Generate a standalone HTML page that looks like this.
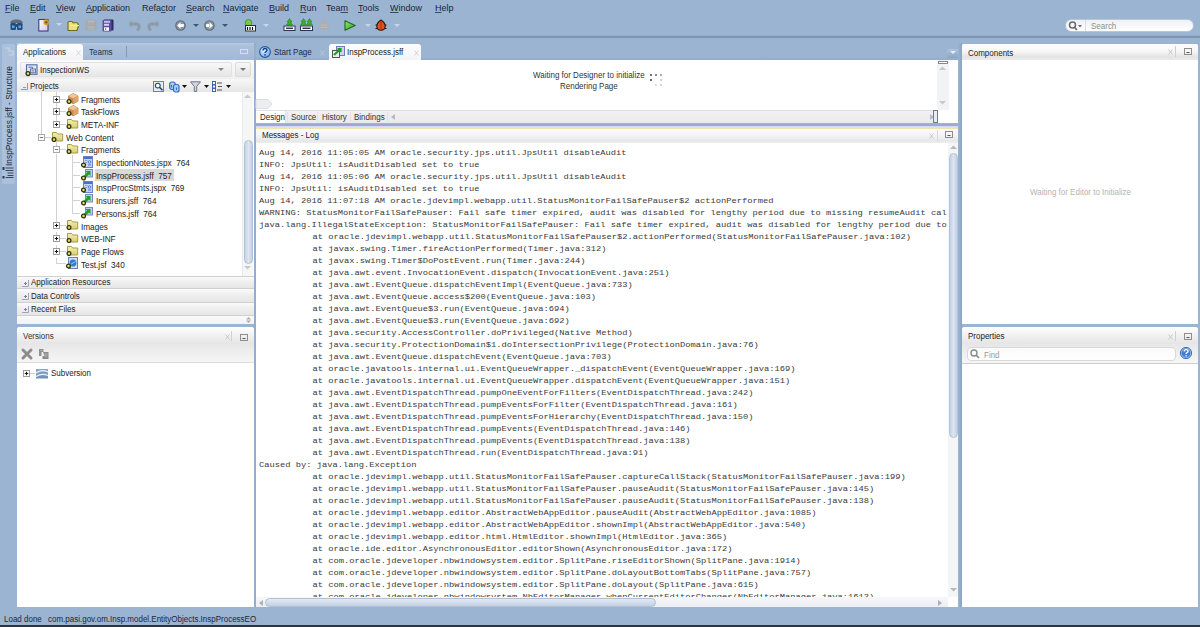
<!DOCTYPE html><html><head><meta charset="utf-8"><style>
html,body{margin:0;padding:0;}
body{width:1200px;height:627px;overflow:hidden;position:relative;background:#9bb4d2;font-family:"Liberation Sans",sans-serif;font-size:8px;color:#1a1a1a;}
div{position:absolute;box-sizing:border-box;}
.t{white-space:pre;line-height:10px;font-size:8.5px;transform:scaleX(0.94);transform-origin:0 0;}
.m{position:absolute;white-space:pre;font-family:"Liberation Mono",monospace;font-size:8.75px;line-height:12px;color:#3a3a3a;transform:scaleY(0.9);transform-origin:0 9px;}
.menu{white-space:pre;font-size:9px;line-height:12px;color:#1b2536;}
.menu u{text-decoration:underline;text-underline-offset:0.6px;text-decoration-thickness:1px;text-decoration-color:#3a4a60;}
.gh{background:linear-gradient(#ffffff 0%,#f4f4f4 40%,#e4e4e4 80%,#ececec 100%);}
</style></head><body>

<svg width="0" height="0" style="position:absolute">
<defs>
<linearGradient id="gfold" x1="0" y1="0" x2="0" y2="1"><stop offset="0" stop-color="#f6f0b8"/><stop offset="1" stop-color="#d8cc70"/></linearGradient>
<linearGradient id="gpkg" x1="0" y1="0" x2="1" y2="1"><stop offset="0" stop-color="#f3c48a"/><stop offset="1" stop-color="#c07a3a"/></linearGradient>
<symbol id="ring" viewBox="0 0 6 6"><circle cx="3" cy="3" r="2" fill="#f4ea70" stroke="#1d3a10" stroke-width="1.3"/></symbol>
<symbol id="fold" viewBox="0 0 13 11">
 <path d="M1.5 1.5 h4 l1.2 1.5 h5 v7 h-10.2 z" fill="url(#gfold)" stroke="#a89c48" stroke-width="1"/>
 <circle cx="3" cy="8.5" r="1.9" fill="#e8e060" stroke="#2a3410" stroke-width="1.3"/>
</symbol>
<symbol id="pkg" viewBox="0 0 13 11">
 <path d="M2.5 3 l4.8 -2.5 l4.7 2.5 v5.2 l-4.7 2.5 l-4.8 -2.5z" fill="#cf8e4e" stroke="#a8703a" stroke-width="0.7" stroke-linejoin="round"/>
 <path d="M2.5 3 l4.8 -2.5 l4.7 2.5 l-4.7 2.3z" fill="#f0c898"/>
 <path d="M7.3 5.3 v5.4" stroke="#b07840" stroke-width="0.7"/>
 <path d="M7.3 5.3 l4.7 -2.3 v5.2 l-4.7 2.5z" fill="#e0a468"/>
 <circle cx="3" cy="8.5" r="1.9" fill="#e8e060" stroke="#2a3410" stroke-width="1.3"/>
</symbol>
<symbol id="jspx" viewBox="0 0 12 12">
 <rect x="2.5" y="0.5" width="9" height="11" fill="#c6d4f4" stroke="#6a80c8" stroke-width="1"/>
 <rect x="3" y="1" width="8" height="2" fill="#4f6fc4"/>
 <path d="M4 4.5h2.5M4 6.5h2" stroke="#8aa0d8" stroke-width="1"/>
 <circle cx="8.5" cy="6" r="1.3" fill="none" stroke="#4f6fc4" stroke-width="0.8"/>
 <path d="M7 9h3" stroke="#4f6fc4" stroke-width="1"/>
 <circle cx="2.5" cy="9" r="1.9" fill="#e8e060" stroke="#2a3410" stroke-width="1.3"/>
</symbol>
<symbol id="jsff" viewBox="0 0 12 12">
 <rect x="4.5" y="0.5" width="7" height="7.5" fill="#c0cdec" stroke="#7a8ac0" stroke-width="1"/>
 <path d="M2 9.5 L7.5 4" stroke="#22a02a" stroke-width="2.6" fill="none"/>
 <path d="M4.5 2 h5 v5z" fill="#22a02a"/>
 <circle cx="2.5" cy="9" r="1.9" fill="#e8e060" stroke="#2a3410" stroke-width="1.3"/>
</symbol>
<symbol id="jsf" viewBox="0 0 12 12">
 <rect x="2.5" y="0.5" width="9" height="11" fill="#d0ddf2" stroke="#6a7fb8" stroke-width="1"/>
 <circle cx="7" cy="6" r="3.4" fill="#2b7fc8"/>
 <path d="M4.5 7.5 l5 -3" stroke="#9fd0f0" stroke-width="1"/>
 <circle cx="2.5" cy="9" r="1.9" fill="#e8e060" stroke="#2a3410" stroke-width="1.3"/>
</symbol>
<symbol id="plus" viewBox="0 0 7 7">
 <rect x="0.5" y="0.5" width="6" height="6" fill="#fff" stroke="#9c9c9c" stroke-width="1"/>
 <path d="M1.8 3.5h3.4M3.5 1.8v3.4" stroke="#111" stroke-width="1"/>
</symbol>
<symbol id="minus" viewBox="0 0 7 7">
 <rect x="0.5" y="0.5" width="6" height="6" fill="#fff" stroke="#a8a8a8" stroke-width="1"/>
 <path d="M1.8 3.5h3.4" stroke="#777" stroke-width="1"/>
</symbol>
</defs></svg>
<div class="menu" style="left:5px;top:1.5px;"><u>F</u>ile</div>
<div class="menu" style="left:30px;top:1.5px;"><u>E</u>dit</div>
<div class="menu" style="left:56px;top:1.5px;"><u>V</u>iew</div>
<div class="menu" style="left:86px;top:1.5px;"><u>A</u>pplication</div>
<div class="menu" style="left:142px;top:1.5px;">Refa<u>c</u>tor</div>
<div class="menu" style="left:186px;top:1.5px;"><u>S</u>earch</div>
<div class="menu" style="left:223px;top:1.5px;"><u>N</u>avigate</div>
<div class="menu" style="left:269px;top:1.5px;"><u>B</u>uild</div>
<div class="menu" style="left:300px;top:1.5px;"><u>R</u>un</div>
<div class="menu" style="left:326px;top:1.5px;">Tea<u>m</u></div>
<div class="menu" style="left:358px;top:1.5px;"><u>T</u>ools</div>
<div class="menu" style="left:390px;top:1.5px;"><u>W</u>indow</div>
<div class="menu" style="left:435px;top:1.5px;"><u>H</u>elp</div>
<svg style="position:absolute;left:9px;top:18px;overflow:visible;" width="15" height="13" viewBox="0 0 15 13"><path d="M1 5 q1 -4 6.5 -3.5 q5.5 -0.5 6.5 3.5z" fill="#5c5f66" opacity="0.85"/><rect x="1.5" y="5" width="5.5" height="7" rx="1.2" fill="#1d4f86"/><rect x="8" y="5" width="5.5" height="7" rx="1.2" fill="#1d4f86"/><rect x="6" y="6" width="3" height="3" fill="#1d4f86"/><rect x="3" y="7.5" width="2.5" height="2.5" fill="#6e9fd0"/><rect x="9.5" y="7.5" width="2.5" height="2.5" fill="#6e9fd0"/></svg>
<svg style="position:absolute;left:38px;top:18px;overflow:visible;" width="12" height="14" viewBox="0 0 12 14"><defs><linearGradient id="gnew" x1="0" y1="0" x2="1" y2="1"><stop offset="0" stop-color="#ffffff"/><stop offset="1" stop-color="#d8c8ec"/></linearGradient><radialGradient id="gstar"><stop offset="0" stop-color="#ffe27a"/><stop offset="0.6" stop-color="#d99a1a"/><stop offset="1" stop-color="#d99a1a" stop-opacity="0"/></radialGradient></defs><rect x="0.8" y="1.5" width="9.2" height="11.5" fill="url(#gnew)" stroke="#3c3c7c" stroke-width="1.1"/><circle cx="8.3" cy="4.3" r="3.6" fill="url(#gstar)"/><circle cx="8.3" cy="4.3" r="1.4" fill="#8a5a10"/></svg>
<svg style="position:absolute;left:56px;top:23px;overflow:visible;" width="6" height="4" viewBox="0 0 6 4"><path d="M0 0h6l-3 3z" fill="#c8d6ea"/></svg>
<svg style="position:absolute;left:66.5px;top:19.5px;overflow:visible;" width="13" height="12" viewBox="0 0 13 12"><path d="M1 2.5 q0 -1 1 -1 h3 l1 1.3 h4 q1 0 1 1 v1.2 h0.8 l-1.8 5.5 h-9z" fill="#ece27a" stroke="#6f6a20" stroke-width="1.1" stroke-linejoin="round"/><path d="M2.5 5.5h9.5" stroke="#f8f0a8" stroke-width="1"/></svg>
<svg style="position:absolute;left:85px;top:19px;overflow:visible;" width="12" height="12" viewBox="0 0 12 12"><rect x="0.5" y="0.5" width="11" height="11" rx="1.5" fill="#a6a9ae"/><rect x="2.5" y="1.5" width="7" height="2" fill="#b8b8b8"/><rect x="2.5" y="4.5" width="7" height="1.2" fill="#b4b0ac"/><rect x="2.5" y="7.5" width="7" height="1.2" fill="#b6b8bc"/><rect x="2.5" y="9.5" width="7" height="1.2" fill="#b0b4b8"/></svg>
<svg style="position:absolute;left:102px;top:19px;overflow:visible;" width="12" height="13" viewBox="0 0 12 13"><rect x="1.5" y="0.5" width="10" height="11" rx="1" fill="#2f2866"/><rect x="0.5" y="1" width="9" height="11.5" rx="1" fill="#5a4f9e"/><rect x="2" y="1.8" width="6" height="2" fill="#c6bdf0"/><rect x="2" y="4.8" width="5" height="2" fill="#d6d0f6"/><rect x="2" y="8.3" width="5" height="3.4" fill="#fff"/><path d="M3.2 9.2v1.6l1.5 -0.8z" fill="#111"/></svg>
<svg style="position:absolute;left:128px;top:19px;overflow:visible;" width="13" height="12" viewBox="0 0 13 12"><path d="M1.5 5h6.5q3.5 0 3.2 3.5l-1.8 3" fill="none" stroke="#8e9ba6" stroke-width="3"/><path d="M0.5 5l3.5 -3.5v7z" fill="#8e9ba6"/></svg>
<svg style="position:absolute;left:147px;top:19px;overflow:visible;" width="13" height="12" viewBox="0 0 13 12"><path d="M11.5 5h-6.5q-3.5 0 -3.2 3.5l1.8 3" fill="none" stroke="#8e9ba6" stroke-width="3"/><path d="M12.5 5l-3.5 -3.5v7z" fill="#8e9ba6"/></svg>
<svg style="position:absolute;left:175px;top:20px;overflow:visible;" width="12" height="11" viewBox="0 0 12 11"><circle cx="5.5" cy="5.5" r="5.3" fill="#5f6a78"/><circle cx="5.5" cy="5.5" r="4.2" fill="#8c96a3"/><path d="M2.2 5.5 l3.3 -3.2 v6.4z M5 4.1h3.8v2.8h-3.8z" fill="#fff"/></svg>
<svg style="position:absolute;left:193px;top:24px;overflow:visible;" width="6" height="4" viewBox="0 0 6 4"><path d="M0 0h6l-3 3z" fill="#3f5778"/></svg>
<svg style="position:absolute;left:204px;top:20px;overflow:visible;" width="12" height="11" viewBox="0 0 12 11"><circle cx="5.5" cy="5.5" r="5.3" fill="#5f6a78"/><circle cx="5.5" cy="5.5" r="4.2" fill="#8c96a3"/><path d="M8.8 5.5 l-3.3 -3.2 v6.4z M2.2 4.1h3.8v2.8h-3.8z" fill="#fff"/></svg>
<svg style="position:absolute;left:222px;top:24px;overflow:visible;" width="6" height="4" viewBox="0 0 6 4"><path d="M0 0h6l-3 3z" fill="#3f5778"/></svg>
<svg style="position:absolute;left:244px;top:19px;overflow:visible;" width="13" height="13" viewBox="0 0 13 13"><circle cx="4.5" cy="3.8" r="3.3" fill="#78c850" stroke="#3a8a20" stroke-width="0.8"/><rect x="1.5" y="6.5" width="10" height="5.5" fill="#fff" stroke="#24303a" stroke-width="1"/><path d="M3.5 8v3M6 8v3M8.5 8v3" stroke="#111" stroke-width="1.2"/></svg>
<svg style="position:absolute;left:263px;top:24px;overflow:visible;" width="6" height="4" viewBox="0 0 6 4"><path d="M0 0h6l-3 3z" fill="#c8d6ea"/></svg>
<svg style="position:absolute;left:283px;top:18px;overflow:visible;" width="13" height="13" viewBox="0 0 13 13"><path d="M6.5 0.5 l2.5 3.5 h-1.5 l2 3 h-6 l2 -3 h-1.5z" fill="#36b030" stroke="#1f7a18" stroke-width="0.5"/><rect x="1" y="8" width="11" height="4.5" fill="#fff" stroke="#2a3450" stroke-width="1"/><path d="M3 10.3h7" stroke="#2a3450" stroke-width="1.5"/></svg>
<svg style="position:absolute;left:300px;top:18px;overflow:visible;" width="13" height="13" viewBox="0 0 13 13"><path d="M3.5 0.5 l2.3 3.3 h-1.3 l1.8 3 h-5.6 l1.8 -3 h-1.3z M9.5 0.5 l2.3 3.3 h-1.3 l1.8 3 h-5.6 l1.8 -3 h-1.3z" fill="#36b030" stroke="#1f7a18" stroke-width="0.5"/><rect x="0.5" y="8" width="12" height="4.5" fill="#fff" stroke="#2a3450" stroke-width="1"/><path d="M2.5 10.3h8" stroke="#2a3450" stroke-width="1.5"/></svg>
<svg style="position:absolute;left:318px;top:19px;overflow:visible;" width="12" height="12" viewBox="0 0 12 12"><path d="M3 1h6v3h2v7h-10v-7h2z" fill="#aaaeb2" opacity="0.85"/><path d="M2.5 6h7M2.5 8.5h7" stroke="#bcbcbc" stroke-width="1"/></svg>
<svg style="position:absolute;left:344px;top:19.5px;overflow:visible;" width="12" height="11" viewBox="0 0 12 11"><defs><linearGradient id="grun" x1="0" y1="0" x2="1" y2="1"><stop offset="0" stop-color="#9ae878"/><stop offset="1" stop-color="#2a9a20"/></linearGradient></defs><path d="M1 0.8 L11.2 5.5 L1 10.2z" fill="url(#grun)" stroke="#1d6a16" stroke-width="1.1" stroke-linejoin="round"/></svg>
<svg style="position:absolute;left:365px;top:24px;overflow:visible;" width="6" height="4" viewBox="0 0 6 4"><path d="M0 0h6l-3 3z" fill="#c8d6ea"/></svg>
<svg style="position:absolute;left:375px;top:19px;overflow:visible;" width="12" height="12" viewBox="0 0 12 12"><path d="M6 1 q4.5 3 4.2 6.5 q-0.5 3.8 -4.2 3.8 q-3.7 0 -4.2 -3.8 q-0.3 -3.5 4.2 -6.5z" fill="#e8501c" stroke="#2a1408" stroke-width="1.1"/><path d="M6 3v8" stroke="#9a2a0a" stroke-width="0.8"/><path d="M0.5 6h1.5M10 6h1.5M0.5 9.5h1.5M10 9.5h1.5" stroke="#1a1a2a" stroke-width="1"/></svg>
<svg style="position:absolute;left:394px;top:24px;overflow:visible;" width="6" height="4" viewBox="0 0 6 4"><path d="M0 0h6l-3 3z" fill="#c8d6ea"/></svg>
<div style="left:0px;top:35px;width:1200px;height:1px;background:#93adcb"></div>
<div style="left:0px;top:36px;width:1200px;height:2px;background:#7b95b5"></div>
<div style="left:1065px;top:19px;width:129px;height:13px;background:linear-gradient(#eef1f5,#ffffff);border:1px solid #b9c6d6;border-radius:7px"></div>
<svg style="position:absolute;left:1068px;top:21px;overflow:visible;" width="16" height="10" viewBox="0 0 16 10"><circle cx="4.5" cy="4" r="3" fill="none" stroke="#6a6a6a" stroke-width="1.5"/><path d="M6.5 6.5 l2.5 2.5" stroke="#6a6a6a" stroke-width="1.7"/><path d="M10 4h4l-2 2.5z" fill="#6a6a6a"/></svg>
<div style="left:1085px;top:20px;width:1px;height:11px;background:#d8dee6"></div>
<div class="t" style="left:1091px;top:21px;color:#8c8c8c">Search</div>
<div style="left:2px;top:44px;width:13px;height:140px;background:#aac0db;border-radius:2px"></div>
<svg style="position:absolute;left:4px;top:47px;overflow:visible;" width="10" height="9" viewBox="0 0 10 9"><path d="M1 1h4v3h4v4h-4" fill="none" stroke="#c8d6e8" stroke-width="1.2"/></svg>
<div class="t" style="left:4px;top:166px;font-size:8.9px;transform:rotate(-90deg) scaleX(0.94);transform-origin:0 0;color:#1b2536">InspProcess.jsff - Structure</div>
<svg style="position:absolute;left:1px;top:166px;overflow:visible;" width="14" height="13" viewBox="0 0 14 13"><rect x="1.5" y="1" width="2" height="3" fill="#2a3a5a"/><rect x="1.5" y="10" width="2" height="2.5" fill="#2a3a5a"/><path d="M4.5 2h8M4.5 4.5h8M6.5 7h6M6.5 9.5h6M4.5 11.5h8" stroke="#3a4658" stroke-width="1"/></svg>
<div style="left:17px;top:43px;width:237px;height:281px;background:#fff"></div>
<div style="left:17px;top:43px;width:237px;height:17px;background:linear-gradient(#b6cae1 0%,#aac0da 20%,#a2b9d6 100%)"></div>
<div style="left:17px;top:43.5px;width:66px;height:16.5px;background:linear-gradient(#fdfdfe,#f1f3f6);border-radius:3px 3px 0 0"></div>
<div class="t" style="left:23px;top:47px;color:#262626">Applications</div>
<svg style="position:absolute;left:75.5px;top:49.5px;overflow:visible;" width="5" height="6" viewBox="0 0 5 6"><path d="M0.5 0.5l4 5M4.5 0.5l-4 5" stroke="#d4d4d4" stroke-width="0.9"/></svg>
<div class="t" style="left:89px;top:47px;color:#23304a">Teams</div>
<div style="left:126px;top:46px;width:1px;height:11px;background:#7f98b8"></div>
<div style="left:240px;top:48.5px;width:8px;height:5.5px;border:1px solid #d6e0ec"></div>
<div style="left:17px;top:60px;width:237px;height:19px;background:linear-gradient(#fbfbfb,#efefef)"></div>
<div style="left:20px;top:62px;width:212px;height:15px;background:linear-gradient(#f8f8f8,#e6e6e6);border:1px solid #e2e2e2;border-radius:2px"></div>
<svg style="position:absolute;left:24.5px;top:64px;overflow:visible;" width="13" height="12" viewBox="0 0 13 12"><rect x="1.5" y="0.8" width="10.5" height="9.5" fill="#d8e8f8" stroke="#5a6c9c" stroke-width="1.1"/><path d="M3.5 3.2h4v5.5" fill="none" stroke="#6a7080" stroke-width="1"/><rect x="5.5" y="5" width="5" height="3.8" fill="#f0f4fa" stroke="#5a6c9c" stroke-width="0.9"/><path d="M6.5 6.5h3M6.5 7.8h3" stroke="#5a6c9c" stroke-width="0.6"/><circle cx="3" cy="9.6" r="1.9" fill="#e8e070" stroke="#2a3410" stroke-width="1.3"/></svg>
<div class="t" style="left:40px;top:65.2px;color:#1a1a1a">InspectionWS</div>
<svg style="position:absolute;left:218px;top:68px;overflow:visible;" width="6" height="4" viewBox="0 0 6 4"><path d="M0 0h6l-3 3z" fill="#8a8a8a"/></svg>
<div style="left:235px;top:62px;width:16px;height:15px;background:linear-gradient(#f7f7f7,#e3e3e3);border:1px solid #dcdcdc;border-radius:2px"></div>
<svg style="position:absolute;left:240px;top:68px;overflow:visible;" width="6" height="4" viewBox="0 0 6 4"><path d="M0 0h6l-3 3z" fill="#7a7a7a"/></svg>
<div style="left:17px;top:79px;width:237px;height:13px;background:linear-gradient(#f7f7f7,#e6e6e6)"></div>
<svg style="position:absolute;left:21px;top:83px;overflow:visible;" width="7" height="7" viewBox="0 0 7 7"><path d="M6.5 0v6.5h-6.5" fill="none" stroke="#8a9ab8" stroke-width="1"/><path d="M2 4.5h3" stroke="#8a9ab8"/></svg>
<div class="t" style="left:30px;top:81.3px;color:#222">Projects</div>
<svg style="position:absolute;left:153px;top:81px;overflow:visible;" width="11" height="11" viewBox="0 0 11 11"><rect x="0.5" y="0.5" width="10" height="10" fill="#e4ecf8" stroke="#6a84b0" stroke-width="1"/><circle cx="4.8" cy="4.6" r="2.4" fill="#fff" stroke="#304060" stroke-width="1.1"/><path d="M6.5 6.3l3 3" stroke="#304060" stroke-width="1.5"/></svg>
<svg style="position:absolute;left:169px;top:80.5px;overflow:visible;" width="11" height="12" viewBox="0 0 11 12"><rect x="0.7" y="1" width="5.5" height="7.5" rx="2" fill="#a8ccf4" stroke="#2f6cc4" stroke-width="1.2"/><rect x="4.5" y="3.5" width="5.5" height="7.5" rx="2" fill="#a8ccf4" stroke="#2f6cc4" stroke-width="1.2"/><path d="M2.5 4v2.5M7.5 6.5v2.5" stroke="#2f6cc4" stroke-width="1"/></svg>
<svg style="position:absolute;left:182px;top:85px;overflow:visible;" width="5" height="3" viewBox="0 0 5 3"><path d="M0 0h5l-2.5 3z" fill="#111"/></svg>
<svg style="position:absolute;left:190px;top:81px;overflow:visible;" width="11" height="11" viewBox="0 0 11 11"><path d="M0.5 0.8h10l-3.8 4.6v5h-2.4v-5z" fill="#d4d6e0" stroke="#707488" stroke-width="1" stroke-linejoin="round"/></svg>
<svg style="position:absolute;left:204px;top:85px;overflow:visible;" width="5" height="3" viewBox="0 0 5 3"><path d="M0 0h5l-2.5 3z" fill="#111"/></svg>
<svg style="position:absolute;left:212px;top:81px;overflow:visible;" width="11" height="11" viewBox="0 0 11 11"><rect x="0.5" y="0.5" width="3" height="3" fill="#fff" stroke="#3c64a8"/><rect x="0.5" y="4" width="3" height="3" fill="#fff" stroke="#3c64a8"/><rect x="0.5" y="7.5" width="3" height="3" fill="#fff" stroke="#3c64a8"/><path d="M5 2h5M6 5.5h4M5 9h5" stroke="#555" stroke-width="1"/></svg>
<svg style="position:absolute;left:226px;top:85px;overflow:visible;" width="5" height="3" viewBox="0 0 5 3"><path d="M0 0h5l-2.5 3z" fill="#111"/></svg>
<div style="left:41px;top:92px;width:1px;height:42px;background:#d2d2d2;"></div>
<div style="left:56px;top:92px;width:1px;height:4px;background:#d2d2d2;"></div>
<div style="left:56px;top:102px;width:1px;height:7px;background:#d2d2d2;"></div>
<div style="left:56px;top:115px;width:1px;height:6px;background:#d2d2d2;"></div>
<div style="left:56px;top:142px;width:1px;height:4px;background:#d2d2d2;"></div>
<div style="left:56px;top:154px;width:1px;height:72px;background:#d2d2d2;"></div>
<div style="left:56px;top:232px;width:1px;height:5px;background:#d2d2d2;"></div>
<div style="left:56px;top:245px;width:1px;height:5px;background:#d2d2d2;"></div>
<div style="left:56px;top:258px;width:1px;height:6px;background:#d2d2d2;"></div>
<div style="left:72px;top:155px;width:1px;height:58px;background:#d2d2d2;"></div>
<svg style="position:absolute;left:53px;top:96px;overflow:visible;" width="7" height="7" viewBox="0 0 7 7"><use href="#plus"/></svg>
<div style="left:60px;top:99px;width:6px;height:1px;background:#d2d2d2;"></div>
<svg style="position:absolute;left:66px;top:93px;overflow:visible;" width="13" height="11" viewBox="0 0 13 11"><use href="#pkg"/></svg>
<div class="t" style="left:81px;top:94.8px;color:#222;font-size:8.72px">Fragments</div>
<svg style="position:absolute;left:53px;top:108px;overflow:visible;" width="7" height="7" viewBox="0 0 7 7"><use href="#plus"/></svg>
<div style="left:60px;top:111px;width:6px;height:1px;background:#d2d2d2;"></div>
<svg style="position:absolute;left:66px;top:105px;overflow:visible;" width="13" height="11" viewBox="0 0 13 11"><use href="#pkg"/></svg>
<div class="t" style="left:81px;top:107.47px;color:#222;font-size:8.72px">TaskFlows</div>
<svg style="position:absolute;left:53px;top:121px;overflow:visible;" width="7" height="7" viewBox="0 0 7 7"><use href="#plus"/></svg>
<div style="left:60px;top:124px;width:6px;height:1px;background:#d2d2d2;"></div>
<svg style="position:absolute;left:66px;top:118px;overflow:visible;" width="13" height="11" viewBox="0 0 13 11"><use href="#fold"/></svg>
<div class="t" style="left:81px;top:120.14px;color:#222;font-size:8.72px">META-INF</div>
<svg style="position:absolute;left:38px;top:134px;overflow:visible;" width="7" height="7" viewBox="0 0 7 7"><use href="#minus"/></svg>
<div style="left:45px;top:137px;width:6px;height:1px;background:#d2d2d2;"></div>
<svg style="position:absolute;left:51px;top:131px;overflow:visible;" width="13" height="11" viewBox="0 0 13 11"><use href="#fold"/></svg>
<div class="t" style="left:65.6px;top:132.80999999999997px;color:#222;font-size:8.72px">Web Content</div>
<svg style="position:absolute;left:53px;top:146px;overflow:visible;" width="7" height="7" viewBox="0 0 7 7"><use href="#minus"/></svg>
<div style="left:60px;top:149px;width:6px;height:1px;background:#d2d2d2;"></div>
<svg style="position:absolute;left:66px;top:143px;overflow:visible;" width="13" height="11" viewBox="0 0 13 11"><use href="#fold"/></svg>
<div class="t" style="left:81px;top:145.48px;color:#222;font-size:8.72px">Fragments</div>
<div style="left:72px;top:162px;width:8px;height:1px;background:#d2d2d2;"></div>
<svg style="position:absolute;left:81px;top:156px;overflow:visible;" width="12" height="12" viewBox="0 0 12 12"><use href="#jspx"/></svg>
<div class="t" style="left:95.7px;top:158.14999999999998px;color:#222;font-size:8.72px">InspectionNotes.jspx  764</div>
<div style="left:95px;top:168.62px;width:79px;height:12.5px;background:#d9d9d9"></div>
<div style="left:72px;top:175px;width:8px;height:1px;background:#d2d2d2;"></div>
<svg style="position:absolute;left:81px;top:169px;overflow:visible;" width="12" height="12" viewBox="0 0 12 12"><use href="#jsff"/></svg>
<div class="t" style="left:95.7px;top:170.82px;color:#222;font-size:8.72px">InspProcess.jsff  757</div>
<div style="left:72px;top:187px;width:8px;height:1px;background:#d2d2d2;"></div>
<svg style="position:absolute;left:81px;top:181px;overflow:visible;" width="12" height="12" viewBox="0 0 12 12"><use href="#jspx"/></svg>
<div class="t" style="left:95.7px;top:183.48999999999998px;color:#222;font-size:8.72px">InspProcStmts.jspx  769</div>
<div style="left:72px;top:200px;width:8px;height:1px;background:#d2d2d2;"></div>
<svg style="position:absolute;left:81px;top:194px;overflow:visible;" width="12" height="12" viewBox="0 0 12 12"><use href="#jsff"/></svg>
<div class="t" style="left:95.7px;top:196.15999999999997px;color:#222;font-size:8.72px">Insurers.jsff  764</div>
<div style="left:72px;top:213px;width:8px;height:1px;background:#d2d2d2;"></div>
<svg style="position:absolute;left:81px;top:207px;overflow:visible;" width="12" height="12" viewBox="0 0 12 12"><use href="#jsff"/></svg>
<div class="t" style="left:95.7px;top:208.82999999999998px;color:#222;font-size:8.72px">Persons.jsff  764</div>
<svg style="position:absolute;left:53px;top:222px;overflow:visible;" width="7" height="7" viewBox="0 0 7 7"><use href="#plus"/></svg>
<div style="left:60px;top:225px;width:6px;height:1px;background:#d2d2d2;"></div>
<svg style="position:absolute;left:66px;top:219px;overflow:visible;" width="13" height="11" viewBox="0 0 13 11"><use href="#fold"/></svg>
<div class="t" style="left:81px;top:221.5px;color:#222;font-size:8.72px">Images</div>
<svg style="position:absolute;left:53px;top:235px;overflow:visible;" width="7" height="7" viewBox="0 0 7 7"><use href="#plus"/></svg>
<div style="left:60px;top:238px;width:6px;height:1px;background:#d2d2d2;"></div>
<svg style="position:absolute;left:66px;top:232px;overflow:visible;" width="13" height="11" viewBox="0 0 13 11"><use href="#fold"/></svg>
<div class="t" style="left:81px;top:234.17px;color:#222;font-size:8.72px">WEB-INF</div>
<svg style="position:absolute;left:53px;top:248px;overflow:visible;" width="7" height="7" viewBox="0 0 7 7"><use href="#plus"/></svg>
<div style="left:60px;top:251px;width:6px;height:1px;background:#d2d2d2;"></div>
<svg style="position:absolute;left:66px;top:245px;overflow:visible;" width="13" height="11" viewBox="0 0 13 11"><use href="#fold"/></svg>
<div class="t" style="left:81px;top:246.83999999999997px;color:#222;font-size:8.72px">Page Flows</div>
<div style="left:57px;top:263px;width:9px;height:1px;background:#d2d2d2;"></div>
<svg style="position:absolute;left:66px;top:257px;overflow:visible;" width="12" height="12" viewBox="0 0 12 12"><use href="#jsf"/></svg>
<div class="t" style="left:81px;top:259.51px;color:#222;font-size:8.72px">Test.jsf  340</div>
<div style="left:242px;top:92px;width:11px;height:184px;background:#f5f6f8;border-left:1px solid #e8eaee"></div>
<div style="left:243.5px;top:139.5px;width:9.5px;height:124.5px;background:linear-gradient(90deg,#c6d4e6,#dde6f1 50%,#c2d0e4);border-radius:5px;border:1px solid #b0c0d8"></div>
<svg style="position:absolute;left:244px;top:94px;overflow:visible;" width="7" height="4" viewBox="0 0 7 4"><path d="M0 4l3.5 -3.5l3.5 3.5z" fill="#c8c8c8"/></svg>
<svg style="position:absolute;left:244px;top:266px;overflow:visible;" width="7" height="4" viewBox="0 0 7 4"><path d="M0 0l3.5 3.5l3.5 -3.5z" fill="#c8c8c8"/></svg>
<div style="left:17px;top:276px;width:237px;height:12px;background:linear-gradient(#fbfbfb,#f0f0f0 40%,#e6e6e6);border-top:1px solid #d0d0d0"></div>
<svg style="position:absolute;left:22px;top:280.0px;overflow:visible;" width="7" height="7" viewBox="0 0 7 7"><path d="M6.5 0v6.5h-6.5" fill="none" stroke="#9aa6bc" stroke-width="1"/><path d="M2 3.5h3M3.5 2v3" stroke="#7a8498"/></svg>
<div class="t" style="left:31px;top:277.3px;color:#222">Application Resources</div>
<div style="left:17px;top:288px;width:237px;height:13.5px;background:linear-gradient(#fbfbfb,#f0f0f0 40%,#e6e6e6);border-top:1px solid #d0d0d0"></div>
<svg style="position:absolute;left:22px;top:293.2px;overflow:visible;" width="7" height="7" viewBox="0 0 7 7"><path d="M6.5 0v6.5h-6.5" fill="none" stroke="#9aa6bc" stroke-width="1"/><path d="M2 3.5h3M3.5 2v3" stroke="#7a8498"/></svg>
<div class="t" style="left:31px;top:290.5px;color:#222">Data Controls</div>
<div style="left:17px;top:301.5px;width:237px;height:13.5px;background:linear-gradient(#fbfbfb,#f0f0f0 40%,#e6e6e6);border-top:1px solid #d0d0d0"></div>
<svg style="position:absolute;left:22px;top:306.4px;overflow:visible;" width="7" height="7" viewBox="0 0 7 7"><path d="M6.5 0v6.5h-6.5" fill="none" stroke="#9aa6bc" stroke-width="1"/><path d="M2 3.5h3M3.5 2v3" stroke="#7a8498"/></svg>
<div class="t" style="left:31px;top:303.7px;color:#222">Recent Files</div>
<div style="left:17px;top:315px;width:237px;height:9px;background:linear-gradient(#fafafa,#f2f2f2);border-top:1px solid #d0d0d0"></div>
<svg style="position:absolute;left:246px;top:317px;overflow:visible;" width="5" height="6" viewBox="0 0 5 6"><path d="M0 2.5l2.5-2.5l2.5 2.5zM0 3.5l2.5 2.5l2.5-2.5z" fill="#aaa"/></svg>
<div style="left:17px;top:327px;width:237px;height:280px;background:#fff;border-radius:3px 3px 0 0"></div>
<div style="left:17px;top:327px;width:237px;height:36px;border-radius:3px 3px 0 0;background:linear-gradient(#ffffff 0%,#f0f0f0 25%,#e6e6e6 45%,#eeeeee 70%,#f6f6f6 100%)"></div>
<div style="left:17px;top:362px;width:237px;height:1px;background:#dcdcdc"></div>
<div class="t" style="left:23px;top:331px;color:#333">Versions</div>
<svg style="position:absolute;left:225px;top:334px;overflow:visible;" width="5" height="6" viewBox="0 0 5 6"><path d="M0.5 0.5l4 5M4.5 0.5l-4 5" stroke="#c4c4c4" stroke-width="0.9"/></svg>
<div style="left:231px;top:331px;width:1px;height:10px;background:#d0d0d0"></div>
<svg style="position:absolute;left:240px;top:334px;overflow:visible;" width="8" height="7" viewBox="0 0 8 7"><rect x="0.5" y="0.5" width="7" height="6" fill="none" stroke="#8e8e8e" stroke-width="1"/><path d="M2.5 4.5h3" stroke="#555" stroke-width="1"/></svg>
<svg style="position:absolute;left:20.5px;top:347.5px;overflow:visible;" width="12" height="12" viewBox="0 0 12 12"><path d="M2 2l8 8M10 2l-8 8" stroke="#8c8c8c" stroke-width="3" stroke-linecap="round"/></svg>
<svg style="position:absolute;left:38px;top:348px;overflow:visible;" width="12" height="12" viewBox="0 0 12 12"><path d="M1 1h4.5v3h-2v4h-2.5z" fill="#909090"/><path d="M5 4h5.5v7h-6v-3h2z" fill="#8a8a8a"/><path d="M6.5 6h3M6.5 8h3" stroke="#c8c8c8" stroke-width="0.8"/><path d="M2.5 2.5h2" stroke="#c0c0c0" stroke-width="0.8"/></svg>
<svg style="position:absolute;left:23px;top:370px;overflow:visible;" width="7" height="7" viewBox="0 0 7 7"><use href="#plus"/></svg>
<div style="left:30px;top:373px;width:5px;height:1px;background:#d2d2d2;"></div>
<svg style="position:absolute;left:36px;top:368.5px;overflow:visible;" width="12" height="10" viewBox="0 0 12 10"><defs><linearGradient id="gsv" x1="0" y1="0" x2="0" y2="1"><stop offset="0" stop-color="#8aa8c8"/><stop offset="1" stop-color="#7090b0"/></linearGradient></defs><rect x="0" y="0" width="12" height="9.5" fill="url(#gsv)"/><path d="M0 4 q6 -4 12 -1 M0 7.5 q6 -3.5 12 -1" fill="none" stroke="#e8f2fa" stroke-width="1.3"/></svg>
<div class="t" style="left:50.6px;top:368px;color:#222">Subversion</div>
<div style="left:253.5px;top:43px;width:2.5px;height:564px;background:#94adcc"></div>
<div style="left:256px;top:43px;width:704px;height:17px;background:linear-gradient(#9bb4d2 0%,#9bb4d2 80%,#92adcc 100%)"></div>
<svg style="position:absolute;left:259px;top:46px;overflow:visible;" width="12" height="12" viewBox="0 0 12 12"><defs><radialGradient id="ghelp" cx="0.4" cy="0.35" r="0.7"><stop offset="0" stop-color="#e4f2fe"/><stop offset="1" stop-color="#6aa8e4"/></radialGradient></defs><circle cx="6" cy="6" r="5.4" fill="url(#ghelp)" stroke="#2458a8" stroke-width="1.1"/><path d="M4.1 4.6 q0 -2.1 1.95 -2.1 q1.95 0 1.95 1.8 q0 1.1 -1.3 1.6 q-0.65 0.3 -0.65 1.2" fill="none" stroke="#15408a" stroke-width="1.4"/><rect x="5.3" y="8.1" width="1.5" height="1.5" fill="#15408a"/></svg>
<div class="t" style="left:274px;top:47.2px;color:#1e2a40">Start Page</div>
<svg style="position:absolute;left:320px;top:49.5px;overflow:visible;" width="5" height="6" viewBox="0 0 5 6"><path d="M0.5 0.5l4 5M4.5 0.5l-4 5" stroke="#b4c6dc" stroke-width="0.9"/></svg>
<div style="left:329px;top:43.5px;width:92px;height:16.5px;background:linear-gradient(#fdfdfe,#f2f4f7);border-radius:3px 3px 0 0"></div>
<svg style="position:absolute;left:332px;top:46px;overflow:visible;" width="13" height="12" viewBox="0 0 13 12"><rect x="4.5" y="0.5" width="8" height="9" fill="#c8d6f4" stroke="#6d7fb8" stroke-width="1"/><rect x="0.5" y="4.5" width="7" height="7" fill="#e8eef8" stroke="#555" stroke-width="1"/><path d="M2 9 L8 3.5 M5.5 3 h3 v3" stroke="#1f9a2a" stroke-width="2.2" fill="none"/></svg>
<div class="t" style="left:347px;top:47.2px;color:#1a1a1a">InspProcess.jsff</div>
<svg style="position:absolute;left:414px;top:49.5px;overflow:visible;" width="5" height="6" viewBox="0 0 5 6"><path d="M0.5 0.5l4 5M4.5 0.5l-4 5" stroke="#d0d0d0" stroke-width="0.9"/></svg>
<div style="left:947px;top:48.5px;width:11.5px;height:9px;background:linear-gradient(#aec3dd,#8aa6c8);border-radius:2px"></div>
<svg style="position:absolute;left:950px;top:51px;overflow:visible;" width="6" height="4" viewBox="0 0 6 4"><path d="M0 0h6l-3 3z" fill="#e8eef8"/></svg>
<div style="left:256px;top:60px;width:704px;height:63px;background:#fff"></div>
<div class="t" style="left:532.5px;top:70px;color:#333">Waiting for Designer to initialize</div>
<div class="t" style="left:559.7px;top:80.5px;color:#333">Rendering Page</div>
<div style="left:650px;top:74px;width:2px;height:2px;background:#3a4a5a;border-radius:1px"></div>
<div style="left:655px;top:74px;width:2px;height:2px;background:#5a6a7a;border-radius:1px"></div>
<div style="left:660px;top:74px;width:2px;height:2px;background:#8a9aaa;border-radius:1px"></div>
<div style="left:650px;top:79px;width:2px;height:2px;background:#2a3a4a;border-radius:1px"></div>
<div style="left:660px;top:79px;width:2px;height:2px;background:#b8c4d0;border-radius:1px"></div>
<div style="left:655px;top:84px;width:2px;height:2px;background:#d0d8e0;border-radius:1px"></div>
<div style="left:660px;top:84px;width:2px;height:2px;background:#c0c8d0;border-radius:1px"></div>
<svg style="position:absolute;left:256px;top:99px;overflow:visible;" width="17" height="10" viewBox="0 0 17 10"><path d="M0 0.5h12l4 4.5l-4 4.5h-12z" fill="#eceef2" stroke="#dadde3" stroke-width="1"/></svg>
<div style="left:937px;top:60px;width:12px;height:50px;background:#f2f3f5"></div>
<div style="left:937.5px;top:60.5px;width:10px;height:3.5px;border:1px solid #7a8aa8;background:#fff"></div>
<svg style="position:absolute;left:939px;top:66px;overflow:visible;" width="7" height="4" viewBox="0 0 7 4"><path d="M0 4l3.5 -3.5l3.5 3.5z" fill="#c8c8c8"/></svg>
<svg style="position:absolute;left:939px;top:101px;overflow:visible;" width="7" height="4" viewBox="0 0 7 4"><path d="M0 0l3.5 3.5l3.5 -3.5z" fill="#c8c8c8"/></svg>
<div style="left:949px;top:60px;width:11px;height:63px;background:#fff"></div>
<div style="left:256px;top:110px;width:681px;height:13px;background:linear-gradient(#f2f0f2,#ebe9ec);border-top:1px solid #dcdfe5"></div>
<div style="left:256px;top:111px;width:30px;height:12px;background:#fff;border-right:1px solid #e0e4ea"></div>
<div class="t" style="left:259.5px;top:112px;color:#222">Design</div>
<div style="left:287px;top:112px;width:1px;height:10px;background:#e6dfe6"></div>
<div class="t" style="left:290.5px;top:112px;color:#333">Source</div>
<div style="left:317px;top:112px;width:1px;height:10px;background:#e6dfe6"></div>
<div class="t" style="left:321.7px;top:112px;color:#333">History</div>
<div style="left:350px;top:112px;width:1px;height:10px;background:#e6dfe6"></div>
<div class="t" style="left:353.7px;top:112px;color:#333">Bindings</div>
<div style="left:387px;top:112px;width:1px;height:10px;background:#e6dfe6"></div>
<svg style="position:absolute;left:391px;top:114px;overflow:visible;" width="4" height="6" viewBox="0 0 4 6"><path d="M4 0v6l-4-3z" fill="#b8b8c8"/></svg>
<svg style="position:absolute;left:930px;top:114px;overflow:visible;" width="4" height="6" viewBox="0 0 4 6"><path d="M0 0v6l4-3z" fill="#b8b8c8"/></svg>
<div style="left:933px;top:110px;width:5px;height:13px;border:1px solid #6a7a90;background:#e8ecf2"></div>
<div style="left:256px;top:123.5px;width:704px;height:2.2px;background:#9ca8d6"></div>
<div style="left:256px;top:125.7px;width:704px;height:0.8px;background:#d8d8ee"></div>
<div style="left:256px;top:126.5px;width:704px;height:2.5px;background:#f2e2ae"></div>
<div style="left:256px;top:129px;width:702px;height:14px;background:linear-gradient(#fbfbfc 0%,#f4f4f6 45%,#e6e8e8 85%,#eeeeee 100%)"></div>
<div class="t" style="left:262px;top:130px;color:#222">Messages - Log</div>
<svg style="position:absolute;left:929px;top:133px;overflow:visible;" width="5" height="6" viewBox="0 0 5 6"><path d="M0.5 0.5l4 5M4.5 0.5l-4 5" stroke="#c4c4c4" stroke-width="0.9"/></svg>
<div style="left:937px;top:130px;width:1px;height:11px;background:#d8d8d8"></div>
<svg style="position:absolute;left:945px;top:131px;overflow:visible;" width="8" height="7" viewBox="0 0 8 7"><rect x="0.5" y="0.5" width="7" height="6" fill="none" stroke="#8e8e8e" stroke-width="1"/><path d="M2.5 4.5h3" stroke="#555" stroke-width="1"/></svg>
<div style="left:256px;top:143px;width:702px;height:464px;background:#fff"></div>
<div style="left:256px;top:142px;width:692px;height:455px;overflow:hidden">
<div class="m" style="left:3px;top:5px">Aug 14, 2016 11:05:05 AM oracle.security.jps.util.JpsUtil disableAudit</div>
<div class="m" style="left:3px;top:17px">INFO: JpsUtil: isAuditDisabled set to true</div>
<div class="m" style="left:3px;top:29px">Aug 14, 2016 11:05:06 AM oracle.security.jps.util.JpsUtil disableAudit</div>
<div class="m" style="left:3px;top:41px">INFO: JpsUtil: isAuditDisabled set to true</div>
<div class="m" style="left:3px;top:53px">Aug 14, 2016 11:07:18 AM oracle.jdevimpl.webapp.util.StatusMonitorFailSafePauser$2 actionPerformed</div>
<div class="m" style="left:3px;top:65px">WARNING: StatusMonitorFailSafePauser: Fail safe timer expired, audit was disabled for lengthy period due to missing resumeAudit cal</div>
<div class="m" style="left:3px;top:77px">java.lang.IllegalStateException: StatusMonitorFailSafePauser: Fail safe timer expired, audit was disabled for lengthy period due to</div>
<div class="m" style="left:56.5px;top:89px">at oracle.jdevimpl.webapp.util.StatusMonitorFailSafePauser$2.actionPerformed(StatusMonitorFailSafePauser.java:102)</div>
<div class="m" style="left:56.5px;top:101px">at javax.swing.Timer.fireActionPerformed(Timer.java:312)</div>
<div class="m" style="left:56.5px;top:113px">at javax.swing.Timer$DoPostEvent.run(Timer.java:244)</div>
<div class="m" style="left:56.5px;top:125px">at java.awt.event.InvocationEvent.dispatch(InvocationEvent.java:251)</div>
<div class="m" style="left:56.5px;top:137px">at java.awt.EventQueue.dispatchEventImpl(EventQueue.java:733)</div>
<div class="m" style="left:56.5px;top:149px">at java.awt.EventQueue.access$200(EventQueue.java:103)</div>
<div class="m" style="left:56.5px;top:161px">at java.awt.EventQueue$3.run(EventQueue.java:694)</div>
<div class="m" style="left:56.5px;top:173px">at java.awt.EventQueue$3.run(EventQueue.java:692)</div>
<div class="m" style="left:56.5px;top:185px">at java.security.AccessController.doPrivileged(Native Method)</div>
<div class="m" style="left:56.5px;top:197px">at java.security.ProtectionDomain$1.doIntersectionPrivilege(ProtectionDomain.java:76)</div>
<div class="m" style="left:56.5px;top:209px">at java.awt.EventQueue.dispatchEvent(EventQueue.java:703)</div>
<div class="m" style="left:56.5px;top:221px">at oracle.javatools.internal.ui.EventQueueWrapper._dispatchEvent(EventQueueWrapper.java:169)</div>
<div class="m" style="left:56.5px;top:233px">at oracle.javatools.internal.ui.EventQueueWrapper.dispatchEvent(EventQueueWrapper.java:151)</div>
<div class="m" style="left:56.5px;top:245px">at java.awt.EventDispatchThread.pumpOneEventForFilters(EventDispatchThread.java:242)</div>
<div class="m" style="left:56.5px;top:257px">at java.awt.EventDispatchThread.pumpEventsForFilter(EventDispatchThread.java:161)</div>
<div class="m" style="left:56.5px;top:269px">at java.awt.EventDispatchThread.pumpEventsForHierarchy(EventDispatchThread.java:150)</div>
<div class="m" style="left:56.5px;top:281px">at java.awt.EventDispatchThread.pumpEvents(EventDispatchThread.java:146)</div>
<div class="m" style="left:56.5px;top:293px">at java.awt.EventDispatchThread.pumpEvents(EventDispatchThread.java:138)</div>
<div class="m" style="left:56.5px;top:305px">at java.awt.EventDispatchThread.run(EventDispatchThread.java:91)</div>
<div class="m" style="left:3px;top:317px">Caused by: java.lang.Exception</div>
<div class="m" style="left:56.5px;top:329px">at oracle.jdevimpl.webapp.util.StatusMonitorFailSafePauser.captureCallStack(StatusMonitorFailSafePauser.java:199)</div>
<div class="m" style="left:56.5px;top:341px">at oracle.jdevimpl.webapp.util.StatusMonitorFailSafePauser.pauseAudit(StatusMonitorFailSafePauser.java:145)</div>
<div class="m" style="left:56.5px;top:353px">at oracle.jdevimpl.webapp.util.StatusMonitorFailSafePauser.pauseAudit(StatusMonitorFailSafePauser.java:138)</div>
<div class="m" style="left:56.5px;top:365px">at oracle.jdevimpl.webapp.editor.AbstractWebAppEditor.pauseAudit(AbstractWebAppEditor.java:1085)</div>
<div class="m" style="left:56.5px;top:377px">at oracle.jdevimpl.webapp.editor.AbstractWebAppEditor.shownImpl(AbstractWebAppEditor.java:540)</div>
<div class="m" style="left:56.5px;top:389px">at oracle.jdevimpl.webapp.editor.html.HtmlEditor.shownImpl(HtmlEditor.java:365)</div>
<div class="m" style="left:56.5px;top:401px">at oracle.ide.editor.AsynchronousEditor.editorShown(AsynchronousEditor.java:172)</div>
<div class="m" style="left:56.5px;top:413px">at com.oracle.jdeveloper.nbwindowsystem.editor.SplitPane.riseEditorShown(SplitPane.java:1914)</div>
<div class="m" style="left:56.5px;top:425px">at com.oracle.jdeveloper.nbwindowsystem.editor.SplitPane.doLayoutBottomTabs(SplitPane.java:757)</div>
<div class="m" style="left:56.5px;top:437px">at com.oracle.jdeveloper.nbwindowsystem.editor.SplitPane.doLayout(SplitPane.java:615)</div>
<div class="m" style="left:56.5px;top:449px">at com.oracle.jdeveloper.nbwindowsystem.NbEditorManager.whenCurrentEditorChanges(NbEditorManager.java:1613)</div>
</div>
<div style="left:256px;top:597px;width:692px;height:10px;background:linear-gradient(#f6f7f9,#eceef1)"></div>
<svg style="position:absolute;left:259px;top:600px;overflow:visible;" width="4" height="6" viewBox="0 0 4 6"><path d="M4 0v6l-4-3z" fill="#b0b0b0"/></svg>
<div style="left:265px;top:598px;width:391px;height:9px;background:linear-gradient(#e2eaf4,#c2d0e3);border:1px solid #b0c0d6;border-radius:4.5px"></div>
<svg style="position:absolute;left:938px;top:600px;overflow:visible;" width="4" height="6" viewBox="0 0 4 6"><path d="M0 0v6l4-3z" fill="#b0b0b0"/></svg>
<div style="left:948px;top:143px;width:10px;height:454px;background:#f4f5f7"></div>
<svg style="position:absolute;left:950px;top:145px;overflow:visible;" width="7" height="4" viewBox="0 0 7 4"><path d="M0 4l3.5 -3.5l3.5 3.5z" fill="#b8b8b8"/></svg>
<div style="left:948.5px;top:153px;width:9.5px;height:285px;background:linear-gradient(90deg,#c2d0e4,#dde6f1 50%,#c2d0e4);border:1px solid #b3c3d9;border-radius:5px"></div>
<svg style="position:absolute;left:950px;top:588px;overflow:visible;" width="7" height="4" viewBox="0 0 7 4"><path d="M0 0l3.5 3.5l3.5 -3.5z" fill="#b8b8b8"/></svg>
<div style="left:958px;top:43px;width:3.5px;height:564px;background:linear-gradient(90deg,#9cb5d3,#8aa3c2)"></div>
<div style="left:961.5px;top:43.5px;width:236px;height:280px;background:#fff;border-radius:2px 2px 0 0"></div>
<div style="left:961.5px;top:43.5px;width:236px;height:16px;border-radius:3px 3px 0 0;background:linear-gradient(#ffffff 0%,#f6f6f6 45%,#e4e4e4 80%,#eaeaea 100%)"></div>
<div class="t" style="left:967.6px;top:47.5px;color:#222">Components</div>
<svg style="position:absolute;left:1168px;top:49px;overflow:visible;" width="5" height="6" viewBox="0 0 5 6"><path d="M0.5 0.5l4 5M4.5 0.5l-4 5" stroke="#c4c4c4" stroke-width="0.9"/></svg>
<div style="left:1175px;top:46px;width:1px;height:11px;background:#d0d0d0"></div>
<svg style="position:absolute;left:1184px;top:48px;overflow:visible;" width="8" height="7" viewBox="0 0 8 7"><rect x="0.5" y="0.5" width="7" height="6" fill="none" stroke="#8e8e8e" stroke-width="1"/><path d="M2.5 4.5h3" stroke="#555" stroke-width="1"/></svg>
<div class="t" style="left:1030px;top:187px;color:#b4b4b4">Waiting for Editor to Initialize</div>
<div style="left:961.5px;top:327px;width:236px;height:280px;background:#fff;border-radius:3px 3px 0 0"></div>
<div style="left:961.5px;top:327px;width:236px;height:36px;border-radius:3px 3px 0 0;background:linear-gradient(#ffffff 0%,#f0f0f0 25%,#e6e6e6 45%,#eeeeee 70%,#f6f6f6 100%)"></div>
<div style="left:961.5px;top:362.5px;width:236px;height:1px;background:#cfcfcf"></div>
<div class="t" style="left:968px;top:331.2px;color:#222">Properties</div>
<svg style="position:absolute;left:1168px;top:334px;overflow:visible;" width="5" height="6" viewBox="0 0 5 6"><path d="M0.5 0.5l4 5M4.5 0.5l-4 5" stroke="#c4c4c4" stroke-width="0.9"/></svg>
<div style="left:1175px;top:331px;width:1px;height:10px;background:#d0d0d0"></div>
<svg style="position:absolute;left:1184px;top:333px;overflow:visible;" width="8" height="7" viewBox="0 0 8 7"><rect x="0.5" y="0.5" width="7" height="6" fill="none" stroke="#8e8e8e" stroke-width="1"/><path d="M2.5 4.5h3" stroke="#555" stroke-width="1"/></svg>
<div style="left:967px;top:347px;width:209px;height:14px;background:linear-gradient(#fafafa,#ffffff);border:1px solid #d8d8d8;border-radius:4px"></div>
<svg style="position:absolute;left:970px;top:349px;overflow:visible;" width="10" height="10" viewBox="0 0 10 10"><circle cx="4" cy="4" r="3" fill="none" stroke="#8a8a8a" stroke-width="1.4"/><path d="M6 6l3 3" stroke="#8a8a8a" stroke-width="1.7"/></svg>
<div class="t" style="left:984px;top:350px;color:#9a9a9a">Find</div>
<svg style="position:absolute;left:1180px;top:347px;overflow:visible;" width="12" height="12" viewBox="0 0 12 12"><circle cx="6" cy="6" r="5.6" fill="#9cc8f0" stroke="#2a5fa8" stroke-width="0.9"/><circle cx="6" cy="6" r="4.4" fill="#3d7fd0"/><path d="M4.2 4.6 q0 -2 1.9 -2 q1.9 0 1.9 1.7 q0 1.1 -1.3 1.6 q-0.6 0.3 -0.6 1.1" fill="none" stroke="#fff" stroke-width="1.4"/><rect x="5.4" y="8.1" width="1.4" height="1.4" fill="#fff"/></svg>
<div class="t" style="left:4px;top:614px;color:#1b2536">Load done</div>
<div class="t" style="left:48px;top:614px;color:#1b2536">com.pasi.gov.om.Insp.model.EntityObjects.InspProcessEO</div>
<div style="left:0px;top:625px;width:1200px;height:2px;background:#2e3540"></div>
</body></html>
